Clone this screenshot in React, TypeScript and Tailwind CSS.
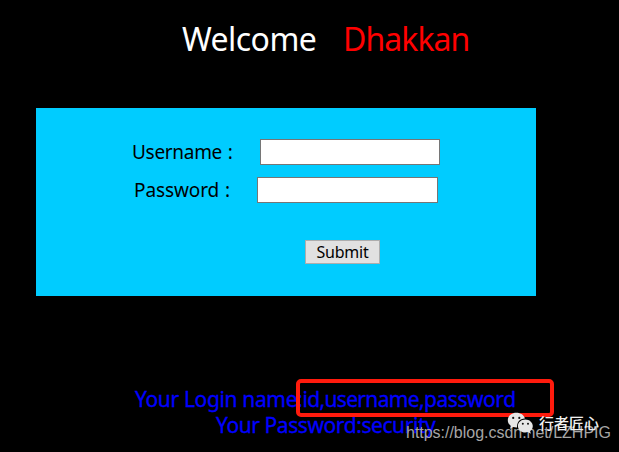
const font = "font-['Noto_Sans','Open_Sans',sans-serif] whitespace-nowrap";

function WeChatIcon() {
  return (
    <svg width="27" height="23" viewBox="0 0 27 23" className="absolute left-[507px] top-[412px]">
      <path fill="#e6e6e6" d="M9.300.8C4.500.8.8 4.200.8 8.200c0 2.400 1.200 4.400 3.100 5.700L3 16.800l3.300-1.700c1 .3 2 .5 3 .5h.7C9.800 10.500 12.300 6.800 17.900 6.500 17.200 3.100 13.600.8 9.300.8Z" />
      <path fill="#e6e6e6" d="M18.300 7.400c-4.100 0-7.400 2.900-7.400 6.500s3.300 6.600 7.400 6.600c.9 0 1.800-.1 2.600-.4l3 1.700-.8-2.700c1.700-1.200 2.700-3 2.700-5.100 0-3.700-3.400-6.600-7.500-6.600Z" />
      <circle cx="6.200" cy="5.900" r="1.100" fill="#111" />
      <circle cx="12.300" cy="5.900" r="1.100" fill="#111" />
      <circle cx="15.800" cy="11.800" r="1" fill="#111" />
      <circle cx="21" cy="11.800" r="1" fill="#111" />
    </svg>
  );
}

export default function App() {
  return (
    <main className={`${font} relative h-[452px] w-[619px] overflow-hidden bg-black`}>
      <h1 className="flex h-[108px] pt-[17px] pl-[182px] text-[32px] leading-[44px] font-normal text-white">
        <span className="w-[161px] tracking-[-0.55px]">Welcome</span>
        <span className="tracking-[-0.95px] text-[#ff0000]">Dhakkan</span>
      </h1>
      <form className="ml-[36px] flex h-[188px] w-[500px] flex-col bg-[#00ccff] pt-[31px] text-[19px] text-black">
        <label className="flex h-[26px] items-center pl-[96px]">
          <span className="w-[128px] tracking-[-0.3px]">
            Username<span className="ml-[1px]"> :</span>
          </span>
          <input className="h-[26px] w-[180px] border border-[#767676] bg-white" />
        </label>
        <label className="mt-[12px] flex h-[26px] items-center pl-[98px]">
          <span className="w-[123px] tracking-[-0.1px]">
            Password<span className="ml-[1px]"> :</span>
          </span>
          <input className="h-[26px] w-[181px] border border-[#767676] bg-white" />
        </label>
        <button type="button" className="mt-[37px] ml-[269px] h-[24px] w-[75px] border border-[#adadad] bg-[#e1e1e1] text-[16px] leading-[22px] tracking-[-0.25px]">
          Submit
        </button>
      </form>
      <div className="pt-[90px] text-[21px] leading-[26px] text-[#0000ff] [-webkit-text-stroke:0.3px_#0000ff]">
        <p className="pl-[135px]">
          <span className="tracking-[-0.35px]">Your Login name:</span>
          <span className="tracking-[-0.65px]">id,username,</span>
          <span className="tracking-[-0.45px]">password</span>
        </p>
        <p className="pl-[216px] tracking-[-0.42px]">Your Password:security</p>
      </div>
      <div className="absolute top-[379px] left-[296px] h-[38px] w-[258px] rounded-[5px] border-4 border-[#ff1b0d]" />
      <p className="absolute top-[422px] left-[406px] font-['Liberation_Sans',sans-serif] text-[16px] leading-[22px] tracking-[-0.02px] text-[#a6a6a6]">
        https://blog.csdn.net/LZHPIG
      </p>
      <WeChatIcon />
      <p className="absolute top-[412px] left-[539px] font-['Noto_Sans_CJK_SC',sans-serif] text-[15px] leading-[22px] font-medium text-[#f0f0f0]">
        行者匠心
      </p>
    </main>
  );
}
